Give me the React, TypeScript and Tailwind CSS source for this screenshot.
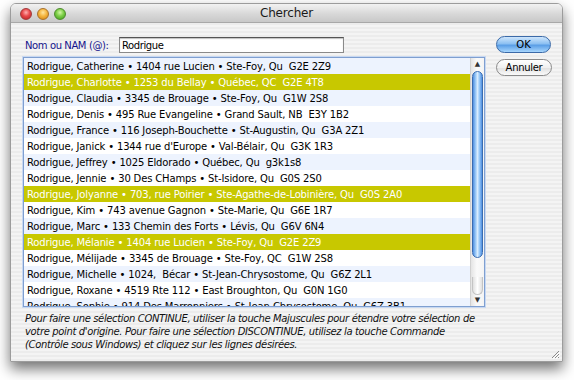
import React from "react";

type Row = { text: string; tone: "blue" | "white" | "sel" };

const rows: Row[] = [
  { text: "Rodrigue, Catherine • 1404 rue Lucien • Ste-Foy, Qu  G2E 2Z9", tone: "blue" },
  { text: "Rodrigue, Charlotte • 1253 du Bellay • Québec, QC  G2E 4T8", tone: "sel" },
  { text: "Rodrigue, Claudia • 3345 de Brouage • Ste-Foy, Qu  G1W 2S8", tone: "blue" },
  { text: "Rodrigue, Denis • 495 Rue Evangeline • Grand Sault, NB  E3Y 1B2", tone: "white" },
  { text: "Rodrigue, France • 116 Joseph-Bouchette • St-Augustin, Qu  G3A 2Z1", tone: "blue" },
  { text: "Rodrigue, Janick • 1344 rue d'Europe • Val-Bélair, Qu  G3K 1R3", tone: "white" },
  { text: "Rodrigue, Jeffrey • 1025 Eldorado • Québec, Qu  g3k1s8", tone: "blue" },
  { text: "Rodrigue, Jennie • 30 Des CHamps • St-Isidore, Qu  G0S 2S0", tone: "white" },
  { text: "Rodrigue, Jolyanne • 703, rue Poirier • Ste-Agathe-de-Lobinière, Qu  G0S 2A0", tone: "sel" },
  { text: "Rodrigue, Kim • 743 avenue Gagnon • Ste-Marie, Qu  G6E 1R7", tone: "white" },
  { text: "Rodrigue, Marc • 133 Chemin des Forts • Lévis, Qu  G6V 6N4", tone: "blue" },
  { text: "Rodrigue, Mélanie • 1404 rue Lucien • Ste-Foy, Qu  G2E 2Z9", tone: "sel" },
  { text: "Rodrigue, Mélijade • 3345 de Brouage • Ste-Foy, QC  G1W 2S8", tone: "white" },
  { text: "Rodrigue, Michelle • 1024,  Bécar • St-Jean-Chrysostome, Qu  G6Z 2L1", tone: "blue" },
  { text: "Rodrigue, Roxane • 4519 Rte 112 • East Broughton, Qu  G0N 1G0", tone: "white" },
  { text: "Rodrigue, Sophie • 914 Des Marronniers • St-Jean-Chrysostome, Qu  G6Z 3B1", tone: "blue" },
];

const toneClass = {
  blue: "bg-[#edf3fe] text-black",
  white: "bg-white text-black",
  sel: "bg-[#c8c800] text-white",
};

function TrafficLights() {
  return (
    <div className="absolute left-[9px] top-[4px] flex gap-[5px]">
      <span className="w-[12px] h-[12px] rounded-full border border-[#a23a3a] bg-[radial-gradient(circle_at_50%_35%,#ffb0b0_0%,#e8484a_45%,#b81c1e_100%)]" />
      <span className="w-[12px] h-[12px] rounded-full border border-[#a8702a] bg-[radial-gradient(circle_at_50%_35%,#ffe6a0_0%,#f5b640_45%,#d0800c_100%)]" />
      <span className="w-[12px] h-[12px] rounded-full border border-[#4d8a2c] bg-[radial-gradient(circle_at_50%_35%,#d4f7a8_0%,#7cce46_45%,#3c9a1a_100%)]" />
    </div>
  );
}

function Scrollbar() {
  return (
    <div className="w-[14px] h-full flex flex-col bg-[linear-gradient(90deg,#e4e4e4,#fafafa_45%,#f4f4f4)] border-l border-[#d0d0d0]">
      <div className="h-[13px] flex items-center justify-center text-[7px] text-[#333] leading-none">▲</div>
      <div className="mx-[1px] h-[187px] rounded-full border border-[#3a6cb0] bg-[linear-gradient(90deg,#4f8ee0,#9ccbf8_30%,#d8ecfe_50%,#9ccbf8_70%,#4f8ee0)]" />
      <div className="flex-1" />
      <div className="mx-[1px] h-[18px] rounded-b-full border border-t-0 border-[#c4c4c4] bg-[linear-gradient(90deg,#e0e0e0,#ffffff_50%,#e0e0e0)]" />
      <div className="h-[11px] flex items-center justify-center text-[7px] text-[#333] leading-none">▼</div>
    </div>
  );
}

export default function App() {
  return (
    <div className="w-[574px] h-[380px] bg-white overflow-hidden pl-[10px] pt-[3px] font-['DejaVu_Sans',sans-serif]">
      <div className="w-[553px] h-[359px] flex flex-col rounded-t-[6px] border border-[#9c9c9c] shadow-[0_7px_14px_rgba(0,0,0,0.55)] overflow-hidden">
        {/* title bar */}
        <div className="relative h-[19px] shrink-0 flex items-center justify-center border-b border-[#a8a8a8] bg-[linear-gradient(180deg,#f2f2f2,#d8d8d8_55%,#c8c8c8)]">
          <TrafficLights />
          <span className="text-[12px] tracking-[-0.2px] text-[#1a1a1a]">Chercher</span>
        </div>

        {/* body */}
        <div className="relative flex-1 flex bg-[repeating-linear-gradient(180deg,#ececec_0px,#ececec_2px,#f4f4f4_2px,#f4f4f4_4px)]">
          <div className="pl-[12px] pt-[14px] w-[475px] flex flex-col">
            <div className="flex items-center h-[16px] pl-[2px]">
              <span className="w-[94px] text-[10px] tracking-[-0.4px] text-[#14148c]">Nom ou NAM (@):</span>
              <div className="w-[225px] h-[16px] border border-[#8a8a8a] border-t-[#555] bg-white shadow-[inset_0_1px_1px_rgba(0,0,0,0.25)] flex items-center pl-[2px] text-[10px] tracking-[-0.4px] text-black">
                Rodrigue
              </div>
            </div>

            <div className="mt-[4px] w-[462px] h-[250px] border border-[#7f9fd0] shadow-[0_0_0_1px_#c7d8f2] bg-white flex overflow-hidden">
              <div className="flex-1 overflow-hidden">
                {rows.map((r, i) => (
                  <div
                    key={i}
                    className={`h-[16px] pl-[3px] flex items-center whitespace-pre text-[10px] tracking-[-0.15px] ${toneClass[r.tone]}`}
                  >
                    {r.text}
                  </div>
                ))}
              </div>
              <Scrollbar />
            </div>

            <div className="mt-[5px] pl-[2px] text-[10px] leading-[13px] italic tracking-[-0.36px] text-[#111]">
              <div>Pour faire une sélection CONTINUE, utiliser la touche Majuscules pour étendre votre sélection de</div>
              <div>votre point d'origine. Pour faire une sélection DISCONTINUE, utilisez la touche Commande</div>
              <div>(Contrôle sous Windows) et cliquez sur les lignes désirées.</div>
            </div>
          </div>

          <div className="pl-[10px] pt-[13px] flex flex-col gap-[6px]">
            <div className="w-[55px] h-[17px] rounded-full border border-[#3b6aa8] bg-[linear-gradient(180deg,#cfe6fc,#8cc0f2_45%,#5a9ee6_55%,#a8d6fd)] flex items-center justify-center text-[10px] text-black">
              OK
            </div>
            <div className="w-[56px] h-[17px] rounded-full border border-[#8a8a8a] bg-[linear-gradient(180deg,#ffffff,#f0f0f0_50%,#e2e2e2_55%,#fafafa)] flex items-center justify-center text-[10px] tracking-[-0.3px] text-black">
              Annuler
            </div>
          </div>

          <svg className="absolute right-[2px] bottom-[2px]" width="10" height="10" viewBox="0 0 10 10">
            <path d="M9 2 L2 9 M9 5 L5 9 M9 8 L8 9" stroke="#8a8a8a" strokeWidth="1" />
            <path d="M10 3 L3 10 M10 6 L6 10" stroke="#ffffff" strokeWidth="1" />
          </svg>
        </div>
      </div>
    </div>
  );
}
